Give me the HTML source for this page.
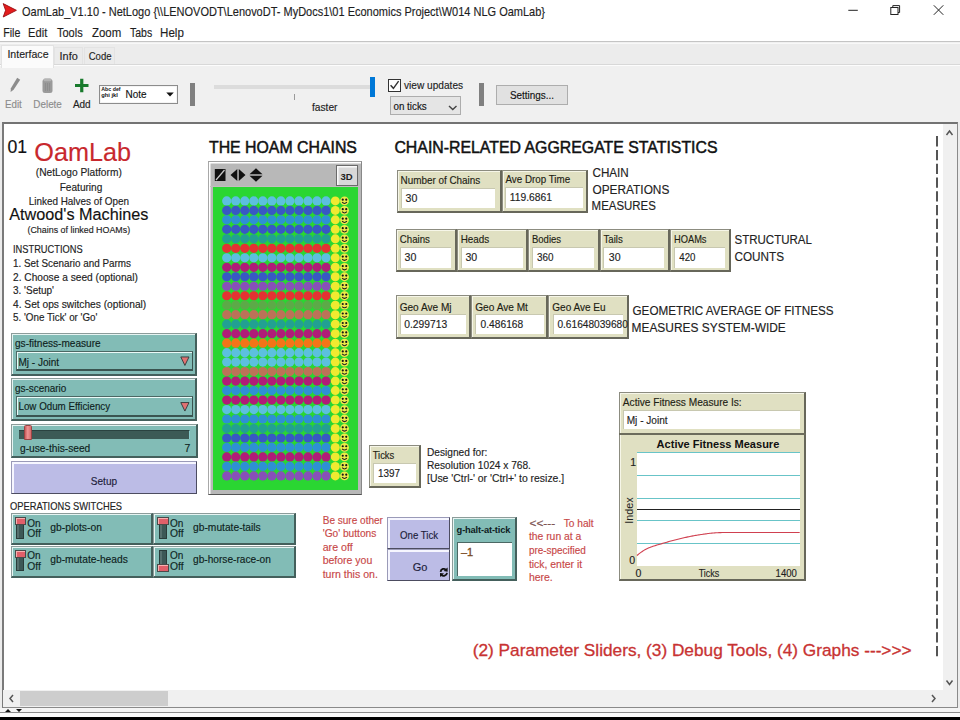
<!DOCTYPE html><html><head><meta charset="utf-8"><style>
html,body{margin:0;padding:0;width:960px;height:720px;overflow:hidden;background:#fff;}
#root{position:relative;width:960px;height:720px;font-family:"Liberation Sans", sans-serif;}
#root>div{position:absolute;box-sizing:border-box;}
svg{position:absolute;left:0;top:0;}
</style></head><body><div id="root">
<div style="left:0px;top:0px;width:960px;height:41px;background:#fff;"></div>
<div style="left:0px;top:41px;width:960px;height:1px;background:#c4c4c4;"></div>
<div style="left:0px;top:42px;width:960px;height:80px;background:#f0f0f0;"></div>
<div style="left:0px;top:43px;width:960px;height:1px;background:#f8f8f8;"></div>
<div style="left:0px;top:44px;width:960px;height:20px;background:#ececec;"></div>
<div style="left:0px;top:64px;width:960px;height:1px;background:#d8d8d8;"></div>
<div style="left:0px;top:65px;width:960px;height:1px;background:#fcfcfc;"></div>
<div style="left:1px;top:45px;width:53px;height:23px;background:#fbfbfb;border:1px solid #e3e3e3;border-bottom:none;"></div>
<div style="left:54px;top:47px;width:29px;height:17px;background:#ebebeb;border:1px solid #e3e3e3;border-bottom:none;"></div>
<div style="left:84px;top:47px;width:31px;height:17px;background:#ebebeb;border:1px solid #e3e3e3;border-bottom:none;"></div>
<div style="left:2px;top:122px;width:956px;height:586px;background:#fff;border-top:2px solid #737373;border-left:2px solid #7a7a7a;border-right:1px solid #8a8a8a;border-bottom:1px solid #8a8a8a;box-sizing:border-box;"></div>
<div style="left:943px;top:124px;width:14px;height:566px;background:#f0f0f0;"></div>
<div style="left:0px;top:122px;width:2px;height:586px;background:#ececec;"></div>
<div style="left:958px;top:122px;width:2px;height:586px;background:#ececec;"></div>
<div style="left:3px;top:690px;width:954px;height:17px;background:#f0f0f0;"></div>
<div style="left:20px;top:691px;width:148px;height:15px;background:#cdcdcd;"></div>
<div style="left:0px;top:708px;width:960px;height:4px;background:#f4f4f4;"></div>
<div style="left:0px;top:712px;width:960px;height:1px;background:#8a8a8a;"></div>
<div style="left:0px;top:713px;width:960px;height:4px;background:#fafafa;"></div>
<div style="left:0px;top:717px;width:960px;height:3px;background:#000;"></div>
<div style="left:98.5px;top:84.75px;width:79.5px;height:19.0px;background:#fff;border:1px solid #8c8c8c;box-shadow:inset 0 0 0 1px #f4f4f4;"></div>
<div style="left:190px;top:82.75px;width:5px;height:23.5px;background:#808080;"></div>
<div style="left:214.4px;top:85.4px;width:155.6px;height:3.3999999999999915px;background:#dcdcdc;"></div>
<div style="left:294px;top:93.5px;width:1px;height:6.5px;background:#9a9a9a;"></div>
<div style="left:370px;top:76.6px;width:5px;height:20.60000000000001px;background:#0078d7;"></div>
<div style="left:388px;top:78.75px;width:13px;height:12.75px;background:#fff;border:1px solid #333;"></div>
<div style="left:390px;top:96px;width:71.25px;height:19.400000000000006px;background:#e5e5e5;border:1px solid #adadad;"></div>
<div style="left:479px;top:82.5px;width:5px;height:23.5px;background:#808080;"></div>
<div style="left:495.6px;top:84.6px;width:72.89999999999998px;height:20.200000000000003px;background:#e1e1e1;border:1px solid #adadad;"></div>
<div style="left:11px;top:332.5px;width:185.5px;height:43.0px;background:#82bcb6;border-top:1px solid #8c9c9a;border-left:1px solid #8c9c9a;border-bottom:2px solid #44605c;border-right:2px solid #44605c;box-shadow:inset 1px 1px 0 #e6f4f2;"></div>
<div style="left:15.5px;top:351px;width:177.0px;height:20.30000000000001px;background:#82bcb6;border-top:1px solid #4c6864;border-left:1px solid #4c6864;border-bottom:2px solid #3a5450;border-right:1px solid #3a5450;box-shadow:inset 1px 1px 0 #eafaf8;"></div>
<div style="left:11px;top:377.6px;width:185.5px;height:43.099999999999966px;background:#82bcb6;border-top:1px solid #8c9c9a;border-left:1px solid #8c9c9a;border-bottom:2px solid #44605c;border-right:2px solid #44605c;box-shadow:inset 1px 1px 0 #e6f4f2;"></div>
<div style="left:15.5px;top:396.3px;width:177.0px;height:20.899999999999977px;background:#82bcb6;border-top:1px solid #4c6864;border-left:1px solid #4c6864;border-bottom:2px solid #3a5450;border-right:1px solid #3a5450;box-shadow:inset 1px 1px 0 #eafaf8;"></div>
<div style="left:11px;top:424.25px;width:186.7px;height:33.35000000000002px;background:#82bcb6;border-top:1px solid #8c9c9a;border-left:1px solid #8c9c9a;border-bottom:2px solid #44605c;border-right:2px solid #44605c;box-shadow:inset 1px 1px 0 #e6f4f2;"></div>
<div style="left:18.5px;top:429.8px;width:171.9px;height:9.0px;background:#3c5a56;border-top:1px solid #2a4240;border-right:1px solid #8cc;"></div>
<div style="left:24.2px;top:425.3px;width:7.800000000000001px;height:14.5px;background:linear-gradient(to right,#c85a5a,#f09494 45%,#d46a6a);border:1px solid #9a4444;border-radius:1.5px 1.5px 0 0;"></div>
<div style="left:11px;top:461.3px;width:185.9px;height:32.5px;background:#bcbce6;border-top:1px solid #9a9ab8;border-left:1px solid #9a9ab8;border-bottom:1.6px solid #4c4c60;border-right:1.6px solid #4c4c60;box-shadow:inset 2px 2px 0 #f6f6ff;"></div>
<div style="left:10.5px;top:513.4px;width:142.5px;height:31.899999999999977px;background:#82bcb6;border-top:1px solid #8c9c9a;border-left:1px solid #8c9c9a;border-bottom:2px solid #44605c;border-right:2px solid #44605c;box-shadow:inset 1px 1px 0 #e6f4f2;"></div>
<div style="left:16.3px;top:517.4px;width:7.800000000000001px;height:21.299999999999955px;background:#3c5856;border:1px solid #2a3c3a;box-shadow:inset 2px 0 0 #56706e;"></div>
<div style="left:14.6px;top:517.4px;width:11.4px;height:7.600000000000023px;background:#e0606a;border:1px solid #4a4a4a;box-shadow:inset 1px 1px 0 #f8b0b0;"></div>
<div style="left:153.3px;top:513.4px;width:142.5px;height:31.899999999999977px;background:#82bcb6;border-top:1px solid #8c9c9a;border-left:1px solid #8c9c9a;border-bottom:2px solid #44605c;border-right:2px solid #44605c;box-shadow:inset 1px 1px 0 #e6f4f2;"></div>
<div style="left:159.1px;top:517.4px;width:7.800000000000011px;height:21.299999999999955px;background:#3c5856;border:1px solid #2a3c3a;box-shadow:inset 2px 0 0 #56706e;"></div>
<div style="left:157.4px;top:517.4px;width:11.400000000000006px;height:7.600000000000023px;background:#e0606a;border:1px solid #4a4a4a;box-shadow:inset 1px 1px 0 #f8b0b0;"></div>
<div style="left:10.5px;top:545.5px;width:142.5px;height:32.0px;background:#82bcb6;border-top:1px solid #8c9c9a;border-left:1px solid #8c9c9a;border-bottom:2px solid #44605c;border-right:2px solid #44605c;box-shadow:inset 1px 1px 0 #e6f4f2;"></div>
<div style="left:16.3px;top:550px;width:7.800000000000001px;height:21.299999999999955px;background:#3c5856;border:1px solid #2a3c3a;box-shadow:inset 2px 0 0 #56706e;"></div>
<div style="left:14.6px;top:550px;width:11.4px;height:7.600000000000023px;background:#e0606a;border:1px solid #4a4a4a;box-shadow:inset 1px 1px 0 #f8b0b0;"></div>
<div style="left:153.3px;top:545.5px;width:142.5px;height:32.0px;background:#82bcb6;border-top:1px solid #8c9c9a;border-left:1px solid #8c9c9a;border-bottom:2px solid #44605c;border-right:2px solid #44605c;box-shadow:inset 1px 1px 0 #e6f4f2;"></div>
<div style="left:159.1px;top:550px;width:7.800000000000011px;height:21.299999999999955px;background:#3c5856;border:1px solid #2a3c3a;box-shadow:inset 2px 0 0 #56706e;"></div>
<div style="left:157.4px;top:564px;width:11.400000000000006px;height:7.600000000000023px;background:#e0606a;border:1px solid #4a4a4a;box-shadow:inset 1px 1px 0 #f8b0b0;"></div>
<div style="left:207.8px;top:161.1px;width:153.8px;height:333.9px;background:#b8b8b8;border-top:1px solid #a0a0a0;border-left:1px solid #a8a8a8;border-right:1.5px solid #888;border-bottom:1px solid #555;box-shadow:inset 1.5px 1.5px 0 #fff;"></div>
<div style="left:212.8px;top:186.7px;width:145.0px;height:303.7px;background:#2ad632;"></div>
<div style="left:209.5px;top:185.5px;width:150.5px;height:1.1999999999999886px;background:#c4bcc0;"></div>
<div style="left:335.6px;top:165.3px;width:22.399999999999977px;height:20.69999999999999px;background:#d8d8d8;border:1px solid #6a6a6a;border-bottom-width:1.5px;border-right-width:1.5px;box-shadow:inset 1.5px 1.5px 0 #fafafa;"></div>
<div style="left:396.5px;top:169.6px;width:105.0px;height:43.400000000000006px;background:#e0e0c2;border-top:1px solid #8c8c80;border-left:1px solid #8c8c80;border-bottom:2px solid #67675a;border-right:2px solid #67675a;box-shadow:inset 1px 1px 0 #f6f6e8;"></div>
<div style="left:400.6px;top:187.5px;width:94.39999999999998px;height:20.5px;background:#fff;border-top:1px solid #c8c8b0;border-left:1px solid #c8c8b0;"></div>
<div style="left:501.5px;top:169.5px;width:86.5px;height:43.5px;background:#e0e0c2;border-top:1px solid #8c8c80;border-left:1px solid #8c8c80;border-bottom:2px solid #67675a;border-right:2px solid #67675a;box-shadow:inset 1px 1px 0 #f6f6e8;"></div>
<div style="left:504.6px;top:187px;width:78.10000000000002px;height:21px;background:#fff;border-top:1px solid #c8c8b0;border-left:1px solid #c8c8b0;"></div>
<div style="left:395.8px;top:228.75px;width:60.89999999999998px;height:42.94999999999999px;background:#e0e0c2;border-top:1px solid #8c8c80;border-left:1px solid #8c8c80;border-bottom:2px solid #67675a;border-right:2px solid #67675a;box-shadow:inset 1px 1px 0 #f6f6e8;"></div>
<div style="left:399.6px;top:247px;width:51.89999999999998px;height:20.5px;background:#fff;border-top:1px solid #c8c8b0;border-left:1px solid #c8c8b0;"></div>
<div style="left:456.7px;top:228.75px;width:71.30000000000001px;height:42.94999999999999px;background:#e0e0c2;border-top:1px solid #8c8c80;border-left:1px solid #8c8c80;border-bottom:2px solid #67675a;border-right:2px solid #67675a;box-shadow:inset 1px 1px 0 #f6f6e8;"></div>
<div style="left:460.5px;top:247px;width:62.5px;height:20.5px;background:#fff;border-top:1px solid #c8c8b0;border-left:1px solid #c8c8b0;"></div>
<div style="left:528px;top:228.75px;width:71.5px;height:42.94999999999999px;background:#e0e0c2;border-top:1px solid #8c8c80;border-left:1px solid #8c8c80;border-bottom:2px solid #67675a;border-right:2px solid #67675a;box-shadow:inset 1px 1px 0 #f6f6e8;"></div>
<div style="left:531.8px;top:247px;width:62.700000000000045px;height:20.5px;background:#fff;border-top:1px solid #c8c8b0;border-left:1px solid #c8c8b0;"></div>
<div style="left:599.5px;top:228.75px;width:70.5px;height:42.94999999999999px;background:#e0e0c2;border-top:1px solid #8c8c80;border-left:1px solid #8c8c80;border-bottom:2px solid #67675a;border-right:2px solid #67675a;box-shadow:inset 1px 1px 0 #f6f6e8;"></div>
<div style="left:603.3px;top:247px;width:61.200000000000045px;height:20.5px;background:#fff;border-top:1px solid #c8c8b0;border-left:1px solid #c8c8b0;"></div>
<div style="left:670px;top:228.75px;width:61.25px;height:42.94999999999999px;background:#e0e0c2;border-top:1px solid #8c8c80;border-left:1px solid #8c8c80;border-bottom:2px solid #67675a;border-right:2px solid #67675a;box-shadow:inset 1px 1px 0 #f6f6e8;"></div>
<div style="left:673.8px;top:247px;width:51.200000000000045px;height:20.5px;background:#fff;border-top:1px solid #c8c8b0;border-left:1px solid #c8c8b0;"></div>
<div style="left:395.7px;top:295.3px;width:75.55000000000001px;height:43.5px;background:#e0e0c2;border-top:1px solid #8c8c80;border-left:1px solid #8c8c80;border-bottom:2px solid #67675a;border-right:2px solid #67675a;box-shadow:inset 1px 1px 0 #f6f6e8;"></div>
<div style="left:399.9px;top:314px;width:66.10000000000002px;height:19.600000000000023px;background:#fff;border-top:1px solid #c8c8b0;border-left:1px solid #c8c8b0;"></div>
<div style="left:471.25px;top:295.3px;width:77.04999999999995px;height:43.5px;background:#e0e0c2;border-top:1px solid #8c8c80;border-left:1px solid #8c8c80;border-bottom:2px solid #67675a;border-right:2px solid #67675a;box-shadow:inset 1px 1px 0 #f6f6e8;"></div>
<div style="left:475.45px;top:314px;width:68.15000000000003px;height:19.600000000000023px;background:#fff;border-top:1px solid #c8c8b0;border-left:1px solid #c8c8b0;"></div>
<div style="left:548.3px;top:295.3px;width:80.70000000000005px;height:43.5px;background:#e0e0c2;border-top:1px solid #8c8c80;border-left:1px solid #8c8c80;border-bottom:2px solid #67675a;border-right:2px solid #67675a;box-shadow:inset 1px 1px 0 #f6f6e8;"></div>
<div style="left:552.5px;top:314px;width:70.5px;height:19.600000000000023px;background:#fff;border-top:1px solid #c8c8b0;border-left:1px solid #c8c8b0;"></div>
<div style="left:368.7px;top:444.6px;width:52.80000000000001px;height:43.14999999999998px;background:#e0e0c2;border-top:1px solid #8c8c80;border-left:1px solid #8c8c80;border-bottom:2px solid #67675a;border-right:2px solid #67675a;box-shadow:inset 1px 1px 0 #f6f6e8;"></div>
<div style="left:372.6px;top:462.5px;width:43.599999999999966px;height:20.69999999999999px;background:#fff;border-top:1px solid #c8c8b0;border-left:1px solid #c8c8b0;"></div>
<div style="left:387.3px;top:516.6px;width:63.19999999999999px;height:32.0px;background:#bcbce6;border-top:1px solid #9a9ab8;border-left:1px solid #9a9ab8;border-bottom:1.6px solid #4c4c60;border-right:1.6px solid #4c4c60;box-shadow:inset 2px 2px 0 #f6f6ff;"></div>
<div style="left:387.3px;top:549.4px;width:63.19999999999999px;height:31.5px;background:#bcbce6;border-top:1px solid #9a9ab8;border-left:1px solid #9a9ab8;border-bottom:1.6px solid #4c4c60;border-right:1.6px solid #4c4c60;box-shadow:inset 2px 2px 0 #f6f6ff;"></div>
<div style="left:451.5px;top:516.6px;width:65.10000000000002px;height:64.29999999999995px;background:#82bcb6;border-top:1px solid #8c9c9a;border-left:1px solid #8c9c9a;border-bottom:2px solid #44605c;border-right:2px solid #44605c;box-shadow:inset 1px 1px 0 #e6f4f2;"></div>
<div style="left:457px;top:542.4px;width:55px;height:33.200000000000045px;background:#fff;border-top:1px solid #4c6864;border-left:1px solid #4c6864;"></div>
<div style="left:619px;top:391.8px;width:186.5px;height:189.40000000000003px;background:#e0e0c2;border-top:1px solid #8c8c80;border-left:1px solid #8c8c80;border-bottom:2px solid #67675a;border-right:2px solid #67675a;box-shadow:inset 1px 1px 0 #f6f6e8;"></div>
<div style="left:619px;top:433.2px;width:186.5px;height:1.400000000000034px;background:#6c6c5c;"></div>
<div style="left:622.8px;top:409.6px;width:176.9000000000001px;height:19.799999999999955px;background:#fff;border-top:1px solid #c8c8b0;border-left:1px solid #c8c8b0;"></div>
<div style="left:636.7px;top:451.75px;width:163.0px;height:114.25px;background:#fff;"></div>
<div style="left:636.7px;top:452px;width:163.0px;height:1px;background:#68c4c8;"></div>
<div style="left:636.7px;top:475px;width:163.0px;height:1px;background:#68c4c8;"></div>
<div style="left:636.7px;top:498px;width:163.0px;height:1px;background:#68c4c8;"></div>
<div style="left:636.7px;top:520px;width:163.0px;height:1px;background:#68c4c8;"></div>
<div style="left:636.7px;top:543px;width:163.0px;height:1px;background:#68c4c8;"></div>
<div style="left:636.7px;top:509px;width:163.0px;height:1px;background:#222;"></div>
<svg width="960" height="720" viewBox="0 0 960 720" font-family='"Liberation Sans", sans-serif'>
<path d="M17.2,77.8 L20.2,79.8 L13.6,89.8 L10.6,92 L10.9,88.2 Z" fill="#8c8c8c"/>
<rect x="42.5" y="79" width="10" height="14" rx="2.5" fill="#9a9a9a"/><rect x="43.5" y="78.3" width="8" height="3" rx="1.5" fill="#b4b4b4"/><path d="M45.5,83 V91 M47.5,83 V91 M49.5,83 V91" stroke="#8a8a8a" stroke-width="0.7"/>
<path d="M75,85.5 H88.5 M81.75,78.75 V92.3" stroke="#187a2c" stroke-width="3.2"/>
<path d="M166.25,92.5 H173.75 L170,96.5 Z" fill="#111"/>
<path d="M390.6,85.2 L393.4,88.3 L398.6,81.2" stroke="#333" stroke-width="1.4" fill="none"/>
<path d="M449,106 L452.75,109.6 L456.5,106" stroke="#444" stroke-width="1.4" fill="none"/>
<path d="M848.3,10.3 H857.8" stroke="#222" stroke-width="1"/>
<rect x="890.8" y="7.5" width="7.2" height="7" fill="none" stroke="#222" stroke-width="1"/><path d="M892.8,7.5 V5.6 H899.6 V12.5 H898" fill="none" stroke="#222" stroke-width="1"/>
<path d="M933.8,5.3 L943.3,14.8 M943.3,5.3 L933.8,14.8" stroke="#222" stroke-width="1"/>
<path d="M3.2,3.6 L16.4,10.3 L3.2,17 L5.6,10.3 Z" fill="#e41c1c" stroke="#9a0c12" stroke-width="0.9" stroke-linejoin="round"/>
<path d="M946.5,135 L949.5,131 L952.5,135" stroke="#555" stroke-width="1.5" fill="none"/>
<path d="M946.5,680.5 L949.5,684.5 L952.5,680.5" stroke="#555" stroke-width="1.5" fill="none"/>
<path d="M13,695 L10,698.5 L13,702" stroke="#555" stroke-width="1.5" fill="none"/>
<path d="M932,695 L935,698.5 L932,702" stroke="#555" stroke-width="1.5" fill="none"/>
<path d="M5,712 L8,709 L11,712 Z M16,709 H22 L19,712 Z" fill="#111"/>
<line x1="937" y1="136.1" x2="937" y2="657" stroke="#555" stroke-width="2" stroke-dasharray="10.3 3.48"/>
<path d="M180.8,356.95 H189 L184.9,365.45 Z" fill="#e07272" stroke="#303838" stroke-width="0.9" stroke-linejoin="round"/>
<path d="M180.8,402.55 H189 L184.9,411.05 Z" fill="#e07272" stroke="#303838" stroke-width="0.9" stroke-linejoin="round"/>
<path d="M214.8,169 H225.5 V181 H214.8 Z" fill="#111"/><path d="M216,180 L224.5,170" stroke="#c8c8c8" stroke-width="1.2"/>
<path d="M237.3,169 L230.5,175 L237.3,181 Z M238.8,169 L245.5,175 L238.8,181 Z" fill="#111"/>
<path d="M249.5,174.2 L256,168.3 L262.5,174.2 Z M249.5,175.8 L256,181.7 L262.5,175.8 Z" fill="#111"/>
<g><circle cx="226.70" cy="200.90" r="4.6" fill="#5cc0de"/><circle cx="235.73" cy="200.90" r="4.6" fill="#5cc0de"/><circle cx="244.76" cy="200.90" r="4.6" fill="#5cc0de"/><circle cx="253.79" cy="200.90" r="4.6" fill="#5cc0de"/><circle cx="262.82" cy="200.90" r="4.6" fill="#5cc0de"/><circle cx="271.85" cy="200.90" r="4.6" fill="#5cc0de"/><circle cx="280.88" cy="200.90" r="4.6" fill="#5cc0de"/><circle cx="289.91" cy="200.90" r="4.6" fill="#5cc0de"/><circle cx="298.94" cy="200.90" r="4.6" fill="#5cc0de"/><circle cx="307.97" cy="200.90" r="4.6" fill="#5cc0de"/><circle cx="317.00" cy="200.90" r="4.6" fill="#5cc0de"/><circle cx="326.03" cy="200.90" r="4.6" fill="#5cc0de"/><circle cx="335.3" cy="200.90" r="4.5" fill="#f0ea30"/><circle cx="344.5" cy="200.90" r="4.4" fill="#ecea48"/><circle cx="342.75" cy="199.70" r="1.1" fill="#161616"/><circle cx="346.25" cy="199.70" r="1.1" fill="#161616"/><path d="M342.1,202.20 Q344.5,204.80 346.9,202.20" stroke="#222" stroke-width="1.1" fill="none"/><circle cx="226.70" cy="210.38" r="4.6" fill="#3858c4"/><circle cx="235.73" cy="210.38" r="4.6" fill="#3858c4"/><circle cx="244.76" cy="210.38" r="4.6" fill="#3858c4"/><circle cx="253.79" cy="210.38" r="4.6" fill="#3858c4"/><circle cx="262.82" cy="210.38" r="4.6" fill="#3858c4"/><circle cx="271.85" cy="210.38" r="4.6" fill="#3858c4"/><circle cx="280.88" cy="210.38" r="4.6" fill="#3858c4"/><circle cx="289.91" cy="210.38" r="4.6" fill="#3858c4"/><circle cx="298.94" cy="210.38" r="4.6" fill="#3858c4"/><circle cx="307.97" cy="210.38" r="4.6" fill="#3858c4"/><circle cx="317.00" cy="210.38" r="4.6" fill="#3858c4"/><circle cx="326.03" cy="210.38" r="4.6" fill="#3858c4"/><circle cx="335.3" cy="210.38" r="4.5" fill="#f0ea30"/><circle cx="344.5" cy="210.38" r="4.4" fill="#ecea48"/><circle cx="342.75" cy="209.18" r="1.1" fill="#161616"/><circle cx="346.25" cy="209.18" r="1.1" fill="#161616"/><path d="M342.1,211.68 Q344.5,214.28 346.9,211.68" stroke="#222" stroke-width="1.1" fill="none"/><circle cx="226.70" cy="219.87" r="4.6" fill="#2e90d4"/><circle cx="235.73" cy="219.87" r="4.6" fill="#2e90d4"/><circle cx="244.76" cy="219.87" r="4.6" fill="#2e90d4"/><circle cx="253.79" cy="219.87" r="4.6" fill="#2e90d4"/><circle cx="262.82" cy="219.87" r="4.6" fill="#2e90d4"/><circle cx="271.85" cy="219.87" r="4.6" fill="#2e90d4"/><circle cx="280.88" cy="219.87" r="4.6" fill="#2e90d4"/><circle cx="289.91" cy="219.87" r="4.6" fill="#2e90d4"/><circle cx="298.94" cy="219.87" r="4.6" fill="#2e90d4"/><circle cx="307.97" cy="219.87" r="4.6" fill="#2e90d4"/><circle cx="317.00" cy="219.87" r="4.6" fill="#2e90d4"/><circle cx="326.03" cy="219.87" r="4.6" fill="#2e90d4"/><circle cx="335.3" cy="219.87" r="4.5" fill="#f0ea30"/><circle cx="344.5" cy="219.87" r="4.4" fill="#ecea48"/><circle cx="342.75" cy="218.67" r="1.1" fill="#161616"/><circle cx="346.25" cy="218.67" r="1.1" fill="#161616"/><path d="M342.1,221.17 Q344.5,223.77 346.9,221.17" stroke="#222" stroke-width="1.1" fill="none"/><circle cx="226.70" cy="229.35" r="4.6" fill="#3858c4"/><circle cx="235.73" cy="229.35" r="4.6" fill="#3858c4"/><circle cx="244.76" cy="229.35" r="4.6" fill="#3858c4"/><circle cx="253.79" cy="229.35" r="4.6" fill="#3858c4"/><circle cx="262.82" cy="229.35" r="4.6" fill="#3858c4"/><circle cx="271.85" cy="229.35" r="4.6" fill="#3858c4"/><circle cx="280.88" cy="229.35" r="4.6" fill="#3858c4"/><circle cx="289.91" cy="229.35" r="4.6" fill="#3858c4"/><circle cx="298.94" cy="229.35" r="4.6" fill="#3858c4"/><circle cx="307.97" cy="229.35" r="4.6" fill="#3858c4"/><circle cx="317.00" cy="229.35" r="4.6" fill="#3858c4"/><circle cx="326.03" cy="229.35" r="4.6" fill="#3858c4"/><circle cx="335.3" cy="229.35" r="4.5" fill="#f0ea30"/><circle cx="344.5" cy="229.35" r="4.4" fill="#ecea48"/><circle cx="342.75" cy="228.15" r="1.1" fill="#161616"/><circle cx="346.25" cy="228.15" r="1.1" fill="#161616"/><path d="M342.1,230.65 Q344.5,233.25 346.9,230.65" stroke="#222" stroke-width="1.1" fill="none"/><circle cx="226.70" cy="238.83" r="4.6" fill="#22a092"/><circle cx="235.73" cy="238.83" r="4.6" fill="#22a092"/><circle cx="244.76" cy="238.83" r="4.6" fill="#22a092"/><circle cx="253.79" cy="238.83" r="4.6" fill="#22a092"/><circle cx="262.82" cy="238.83" r="4.6" fill="#22a092"/><circle cx="271.85" cy="238.83" r="4.6" fill="#22a092"/><circle cx="280.88" cy="238.83" r="4.6" fill="#22a092"/><circle cx="289.91" cy="238.83" r="4.6" fill="#22a092"/><circle cx="298.94" cy="238.83" r="4.6" fill="#22a092"/><circle cx="307.97" cy="238.83" r="4.6" fill="#22a092"/><circle cx="317.00" cy="238.83" r="4.6" fill="#22a092"/><circle cx="326.03" cy="238.83" r="4.6" fill="#22a092"/><circle cx="335.3" cy="238.83" r="4.5" fill="#f0ea30"/><circle cx="344.5" cy="238.83" r="4.4" fill="#ecea48"/><circle cx="342.75" cy="237.63" r="1.1" fill="#161616"/><circle cx="346.25" cy="237.63" r="1.1" fill="#161616"/><path d="M342.1,240.13 Q344.5,242.73 346.9,240.13" stroke="#222" stroke-width="1.1" fill="none"/><circle cx="226.70" cy="248.31" r="4.6" fill="#e43232"/><circle cx="235.73" cy="248.31" r="4.6" fill="#e43232"/><circle cx="244.76" cy="248.31" r="4.6" fill="#e43232"/><circle cx="253.79" cy="248.31" r="4.6" fill="#e43232"/><circle cx="262.82" cy="248.31" r="4.6" fill="#e43232"/><circle cx="271.85" cy="248.31" r="4.6" fill="#e43232"/><circle cx="280.88" cy="248.31" r="4.6" fill="#e43232"/><circle cx="289.91" cy="248.31" r="4.6" fill="#e43232"/><circle cx="298.94" cy="248.31" r="4.6" fill="#e43232"/><circle cx="307.97" cy="248.31" r="4.6" fill="#e43232"/><circle cx="317.00" cy="248.31" r="4.6" fill="#e43232"/><circle cx="326.03" cy="248.31" r="4.6" fill="#e43232"/><circle cx="335.3" cy="248.31" r="4.5" fill="#f0ea30"/><circle cx="344.5" cy="248.31" r="4.4" fill="#ecea48"/><circle cx="342.75" cy="247.12" r="1.1" fill="#161616"/><circle cx="346.25" cy="247.12" r="1.1" fill="#161616"/><path d="M342.1,249.62 Q344.5,252.22 346.9,249.62" stroke="#222" stroke-width="1.1" fill="none"/><circle cx="226.70" cy="257.80" r="4.6" fill="#5cc0de"/><circle cx="235.73" cy="257.80" r="4.6" fill="#5cc0de"/><circle cx="244.76" cy="257.80" r="4.6" fill="#5cc0de"/><circle cx="253.79" cy="257.80" r="4.6" fill="#5cc0de"/><circle cx="262.82" cy="257.80" r="4.6" fill="#5cc0de"/><circle cx="271.85" cy="257.80" r="4.6" fill="#5cc0de"/><circle cx="280.88" cy="257.80" r="4.6" fill="#5cc0de"/><circle cx="289.91" cy="257.80" r="4.6" fill="#5cc0de"/><circle cx="298.94" cy="257.80" r="4.6" fill="#5cc0de"/><circle cx="307.97" cy="257.80" r="4.6" fill="#5cc0de"/><circle cx="317.00" cy="257.80" r="4.6" fill="#5cc0de"/><circle cx="326.03" cy="257.80" r="4.6" fill="#5cc0de"/><circle cx="335.3" cy="257.80" r="4.5" fill="#f0ea30"/><circle cx="344.5" cy="257.80" r="4.4" fill="#ecea48"/><circle cx="342.75" cy="256.60" r="1.1" fill="#161616"/><circle cx="346.25" cy="256.60" r="1.1" fill="#161616"/><path d="M342.1,259.10 Q344.5,261.70 346.9,259.10" stroke="#222" stroke-width="1.1" fill="none"/><circle cx="226.70" cy="267.28" r="4.6" fill="#b01c78"/><circle cx="235.73" cy="267.28" r="4.6" fill="#b01c78"/><circle cx="244.76" cy="267.28" r="4.6" fill="#b01c78"/><circle cx="253.79" cy="267.28" r="4.6" fill="#b01c78"/><circle cx="262.82" cy="267.28" r="4.6" fill="#b01c78"/><circle cx="271.85" cy="267.28" r="4.6" fill="#b01c78"/><circle cx="280.88" cy="267.28" r="4.6" fill="#b01c78"/><circle cx="289.91" cy="267.28" r="4.6" fill="#b01c78"/><circle cx="298.94" cy="267.28" r="4.6" fill="#b01c78"/><circle cx="307.97" cy="267.28" r="4.6" fill="#b01c78"/><circle cx="317.00" cy="267.28" r="4.6" fill="#b01c78"/><circle cx="326.03" cy="267.28" r="4.6" fill="#b01c78"/><circle cx="335.3" cy="267.28" r="4.5" fill="#f0ea30"/><circle cx="344.5" cy="267.28" r="4.4" fill="#ecea48"/><circle cx="342.75" cy="266.08" r="1.1" fill="#161616"/><circle cx="346.25" cy="266.08" r="1.1" fill="#161616"/><path d="M342.1,268.58 Q344.5,271.18 346.9,268.58" stroke="#222" stroke-width="1.1" fill="none"/><circle cx="226.70" cy="276.76" r="4.6" fill="#3858c4"/><circle cx="235.73" cy="276.76" r="4.6" fill="#3858c4"/><circle cx="244.76" cy="276.76" r="4.6" fill="#3858c4"/><circle cx="253.79" cy="276.76" r="4.6" fill="#3858c4"/><circle cx="262.82" cy="276.76" r="4.6" fill="#3858c4"/><circle cx="271.85" cy="276.76" r="4.6" fill="#3858c4"/><circle cx="280.88" cy="276.76" r="4.6" fill="#3858c4"/><circle cx="289.91" cy="276.76" r="4.6" fill="#3858c4"/><circle cx="298.94" cy="276.76" r="4.6" fill="#3858c4"/><circle cx="307.97" cy="276.76" r="4.6" fill="#3858c4"/><circle cx="317.00" cy="276.76" r="4.6" fill="#3858c4"/><circle cx="326.03" cy="276.76" r="4.6" fill="#3858c4"/><circle cx="335.3" cy="276.76" r="4.5" fill="#f0ea30"/><circle cx="344.5" cy="276.76" r="4.4" fill="#ecea48"/><circle cx="342.75" cy="275.56" r="1.1" fill="#161616"/><circle cx="346.25" cy="275.56" r="1.1" fill="#161616"/><path d="M342.1,278.06 Q344.5,280.66 346.9,278.06" stroke="#222" stroke-width="1.1" fill="none"/><circle cx="226.70" cy="286.25" r="4.6" fill="#8850b8"/><circle cx="235.73" cy="286.25" r="4.6" fill="#8850b8"/><circle cx="244.76" cy="286.25" r="4.6" fill="#8850b8"/><circle cx="253.79" cy="286.25" r="4.6" fill="#8850b8"/><circle cx="262.82" cy="286.25" r="4.6" fill="#8850b8"/><circle cx="271.85" cy="286.25" r="4.6" fill="#8850b8"/><circle cx="280.88" cy="286.25" r="4.6" fill="#8850b8"/><circle cx="289.91" cy="286.25" r="4.6" fill="#8850b8"/><circle cx="298.94" cy="286.25" r="4.6" fill="#8850b8"/><circle cx="307.97" cy="286.25" r="4.6" fill="#8850b8"/><circle cx="317.00" cy="286.25" r="4.6" fill="#8850b8"/><circle cx="326.03" cy="286.25" r="4.6" fill="#8850b8"/><circle cx="335.3" cy="286.25" r="4.5" fill="#f0ea30"/><circle cx="344.5" cy="286.25" r="4.4" fill="#ecea48"/><circle cx="342.75" cy="285.05" r="1.1" fill="#161616"/><circle cx="346.25" cy="285.05" r="1.1" fill="#161616"/><path d="M342.1,287.55 Q344.5,290.15 346.9,287.55" stroke="#222" stroke-width="1.1" fill="none"/><circle cx="226.70" cy="295.73" r="4.6" fill="#e43232"/><circle cx="235.73" cy="295.73" r="4.6" fill="#e43232"/><circle cx="244.76" cy="295.73" r="4.6" fill="#e43232"/><circle cx="253.79" cy="295.73" r="4.6" fill="#e43232"/><circle cx="262.82" cy="295.73" r="4.6" fill="#e43232"/><circle cx="271.85" cy="295.73" r="4.6" fill="#e43232"/><circle cx="280.88" cy="295.73" r="4.6" fill="#e43232"/><circle cx="289.91" cy="295.73" r="4.6" fill="#e43232"/><circle cx="298.94" cy="295.73" r="4.6" fill="#e43232"/><circle cx="307.97" cy="295.73" r="4.6" fill="#e43232"/><circle cx="317.00" cy="295.73" r="4.6" fill="#e43232"/><circle cx="326.03" cy="295.73" r="4.6" fill="#e43232"/><circle cx="335.3" cy="295.73" r="4.5" fill="#f0ea30"/><circle cx="344.5" cy="295.73" r="4.4" fill="#ecea48"/><circle cx="342.75" cy="294.53" r="1.1" fill="#161616"/><circle cx="346.25" cy="294.53" r="1.1" fill="#161616"/><path d="M342.1,297.03 Q344.5,299.63 346.9,297.03" stroke="#222" stroke-width="1.1" fill="none"/><circle cx="226.70" cy="305.21" r="4.6" fill="#5caa48"/><circle cx="235.73" cy="305.21" r="4.6" fill="#5caa48"/><circle cx="244.76" cy="305.21" r="4.6" fill="#5caa48"/><circle cx="253.79" cy="305.21" r="4.6" fill="#5caa48"/><circle cx="262.82" cy="305.21" r="4.6" fill="#5caa48"/><circle cx="271.85" cy="305.21" r="4.6" fill="#5caa48"/><circle cx="280.88" cy="305.21" r="4.6" fill="#5caa48"/><circle cx="289.91" cy="305.21" r="4.6" fill="#5caa48"/><circle cx="298.94" cy="305.21" r="4.6" fill="#5caa48"/><circle cx="307.97" cy="305.21" r="4.6" fill="#5caa48"/><circle cx="317.00" cy="305.21" r="4.6" fill="#5caa48"/><circle cx="326.03" cy="305.21" r="4.6" fill="#5caa48"/><circle cx="335.3" cy="305.21" r="4.5" fill="#f0ea30"/><circle cx="344.5" cy="305.21" r="4.4" fill="#ecea48"/><circle cx="342.75" cy="304.01" r="1.1" fill="#161616"/><circle cx="346.25" cy="304.01" r="1.1" fill="#161616"/><path d="M342.1,306.51 Q344.5,309.11 346.9,306.51" stroke="#222" stroke-width="1.1" fill="none"/><circle cx="226.70" cy="314.70" r="4.6" fill="#bc7258"/><circle cx="235.73" cy="314.70" r="4.6" fill="#bc7258"/><circle cx="244.76" cy="314.70" r="4.6" fill="#bc7258"/><circle cx="253.79" cy="314.70" r="4.6" fill="#bc7258"/><circle cx="262.82" cy="314.70" r="4.6" fill="#bc7258"/><circle cx="271.85" cy="314.70" r="4.6" fill="#bc7258"/><circle cx="280.88" cy="314.70" r="4.6" fill="#bc7258"/><circle cx="289.91" cy="314.70" r="4.6" fill="#bc7258"/><circle cx="298.94" cy="314.70" r="4.6" fill="#bc7258"/><circle cx="307.97" cy="314.70" r="4.6" fill="#bc7258"/><circle cx="317.00" cy="314.70" r="4.6" fill="#bc7258"/><circle cx="326.03" cy="314.70" r="4.6" fill="#bc7258"/><circle cx="335.3" cy="314.70" r="4.5" fill="#f0ea30"/><circle cx="344.5" cy="314.70" r="4.4" fill="#ecea48"/><circle cx="342.75" cy="313.50" r="1.1" fill="#161616"/><circle cx="346.25" cy="313.50" r="1.1" fill="#161616"/><path d="M342.1,316.00 Q344.5,318.60 346.9,316.00" stroke="#222" stroke-width="1.1" fill="none"/><circle cx="226.70" cy="324.18" r="4.6" fill="#22a092"/><circle cx="235.73" cy="324.18" r="4.6" fill="#22a092"/><circle cx="244.76" cy="324.18" r="4.6" fill="#22a092"/><circle cx="253.79" cy="324.18" r="4.6" fill="#22a092"/><circle cx="262.82" cy="324.18" r="4.6" fill="#22a092"/><circle cx="271.85" cy="324.18" r="4.6" fill="#22a092"/><circle cx="280.88" cy="324.18" r="4.6" fill="#22a092"/><circle cx="289.91" cy="324.18" r="4.6" fill="#22a092"/><circle cx="298.94" cy="324.18" r="4.6" fill="#22a092"/><circle cx="307.97" cy="324.18" r="4.6" fill="#22a092"/><circle cx="317.00" cy="324.18" r="4.6" fill="#22a092"/><circle cx="326.03" cy="324.18" r="4.6" fill="#22a092"/><circle cx="335.3" cy="324.18" r="4.5" fill="#f0ea30"/><circle cx="344.5" cy="324.18" r="4.4" fill="#ecea48"/><circle cx="342.75" cy="322.98" r="1.1" fill="#161616"/><circle cx="346.25" cy="322.98" r="1.1" fill="#161616"/><path d="M342.1,325.48 Q344.5,328.08 346.9,325.48" stroke="#222" stroke-width="1.1" fill="none"/><circle cx="226.70" cy="333.66" r="4.6" fill="#b01c78"/><circle cx="235.73" cy="333.66" r="4.6" fill="#b01c78"/><circle cx="244.76" cy="333.66" r="4.6" fill="#b01c78"/><circle cx="253.79" cy="333.66" r="4.6" fill="#b01c78"/><circle cx="262.82" cy="333.66" r="4.6" fill="#b01c78"/><circle cx="271.85" cy="333.66" r="4.6" fill="#b01c78"/><circle cx="280.88" cy="333.66" r="4.6" fill="#b01c78"/><circle cx="289.91" cy="333.66" r="4.6" fill="#b01c78"/><circle cx="298.94" cy="333.66" r="4.6" fill="#b01c78"/><circle cx="307.97" cy="333.66" r="4.6" fill="#b01c78"/><circle cx="317.00" cy="333.66" r="4.6" fill="#b01c78"/><circle cx="326.03" cy="333.66" r="4.6" fill="#b01c78"/><circle cx="335.3" cy="333.66" r="4.5" fill="#f0ea30"/><circle cx="344.5" cy="333.66" r="4.4" fill="#ecea48"/><circle cx="342.75" cy="332.46" r="1.1" fill="#161616"/><circle cx="346.25" cy="332.46" r="1.1" fill="#161616"/><path d="M342.1,334.96 Q344.5,337.56 346.9,334.96" stroke="#222" stroke-width="1.1" fill="none"/><circle cx="226.70" cy="343.14" r="4.6" fill="#f47418"/><circle cx="235.73" cy="343.14" r="4.6" fill="#f47418"/><circle cx="244.76" cy="343.14" r="4.6" fill="#f47418"/><circle cx="253.79" cy="343.14" r="4.6" fill="#f47418"/><circle cx="262.82" cy="343.14" r="4.6" fill="#f47418"/><circle cx="271.85" cy="343.14" r="4.6" fill="#f47418"/><circle cx="280.88" cy="343.14" r="4.6" fill="#f47418"/><circle cx="289.91" cy="343.14" r="4.6" fill="#f47418"/><circle cx="298.94" cy="343.14" r="4.6" fill="#f47418"/><circle cx="307.97" cy="343.14" r="4.6" fill="#f47418"/><circle cx="317.00" cy="343.14" r="4.6" fill="#f47418"/><circle cx="326.03" cy="343.14" r="4.6" fill="#f47418"/><circle cx="335.3" cy="343.14" r="4.5" fill="#f0ea30"/><circle cx="344.5" cy="343.14" r="4.4" fill="#ecea48"/><circle cx="342.75" cy="341.94" r="1.1" fill="#161616"/><circle cx="346.25" cy="341.94" r="1.1" fill="#161616"/><path d="M342.1,344.44 Q344.5,347.04 346.9,344.44" stroke="#222" stroke-width="1.1" fill="none"/><circle cx="226.70" cy="352.63" r="4.6" fill="#5cc0de"/><circle cx="235.73" cy="352.63" r="4.6" fill="#5cc0de"/><circle cx="244.76" cy="352.63" r="4.6" fill="#5cc0de"/><circle cx="253.79" cy="352.63" r="4.6" fill="#5cc0de"/><circle cx="262.82" cy="352.63" r="4.6" fill="#5cc0de"/><circle cx="271.85" cy="352.63" r="4.6" fill="#5cc0de"/><circle cx="280.88" cy="352.63" r="4.6" fill="#5cc0de"/><circle cx="289.91" cy="352.63" r="4.6" fill="#5cc0de"/><circle cx="298.94" cy="352.63" r="4.6" fill="#5cc0de"/><circle cx="307.97" cy="352.63" r="4.6" fill="#5cc0de"/><circle cx="317.00" cy="352.63" r="4.6" fill="#5cc0de"/><circle cx="326.03" cy="352.63" r="4.6" fill="#5cc0de"/><circle cx="335.3" cy="352.63" r="4.5" fill="#f0ea30"/><circle cx="344.5" cy="352.63" r="4.4" fill="#ecea48"/><circle cx="342.75" cy="351.43" r="1.1" fill="#161616"/><circle cx="346.25" cy="351.43" r="1.1" fill="#161616"/><path d="M342.1,353.93 Q344.5,356.53 346.9,353.93" stroke="#222" stroke-width="1.1" fill="none"/><circle cx="226.70" cy="362.11" r="4.6" fill="#5cc0de"/><circle cx="235.73" cy="362.11" r="4.6" fill="#5cc0de"/><circle cx="244.76" cy="362.11" r="4.6" fill="#5cc0de"/><circle cx="253.79" cy="362.11" r="4.6" fill="#5cc0de"/><circle cx="262.82" cy="362.11" r="4.6" fill="#5cc0de"/><circle cx="271.85" cy="362.11" r="4.6" fill="#5cc0de"/><circle cx="280.88" cy="362.11" r="4.6" fill="#5cc0de"/><circle cx="289.91" cy="362.11" r="4.6" fill="#5cc0de"/><circle cx="298.94" cy="362.11" r="4.6" fill="#5cc0de"/><circle cx="307.97" cy="362.11" r="4.6" fill="#5cc0de"/><circle cx="317.00" cy="362.11" r="4.6" fill="#5cc0de"/><circle cx="326.03" cy="362.11" r="4.6" fill="#5cc0de"/><circle cx="335.3" cy="362.11" r="4.5" fill="#f0ea30"/><circle cx="344.5" cy="362.11" r="4.4" fill="#ecea48"/><circle cx="342.75" cy="360.91" r="1.1" fill="#161616"/><circle cx="346.25" cy="360.91" r="1.1" fill="#161616"/><path d="M342.1,363.41 Q344.5,366.01 346.9,363.41" stroke="#222" stroke-width="1.1" fill="none"/><circle cx="226.70" cy="371.59" r="4.6" fill="#bc7258"/><circle cx="235.73" cy="371.59" r="4.6" fill="#bc7258"/><circle cx="244.76" cy="371.59" r="4.6" fill="#bc7258"/><circle cx="253.79" cy="371.59" r="4.6" fill="#bc7258"/><circle cx="262.82" cy="371.59" r="4.6" fill="#bc7258"/><circle cx="271.85" cy="371.59" r="4.6" fill="#bc7258"/><circle cx="280.88" cy="371.59" r="4.6" fill="#bc7258"/><circle cx="289.91" cy="371.59" r="4.6" fill="#bc7258"/><circle cx="298.94" cy="371.59" r="4.6" fill="#bc7258"/><circle cx="307.97" cy="371.59" r="4.6" fill="#bc7258"/><circle cx="317.00" cy="371.59" r="4.6" fill="#bc7258"/><circle cx="326.03" cy="371.59" r="4.6" fill="#bc7258"/><circle cx="335.3" cy="371.59" r="4.5" fill="#f0ea30"/><circle cx="344.5" cy="371.59" r="4.4" fill="#ecea48"/><circle cx="342.75" cy="370.39" r="1.1" fill="#161616"/><circle cx="346.25" cy="370.39" r="1.1" fill="#161616"/><path d="M342.1,372.89 Q344.5,375.49 346.9,372.89" stroke="#222" stroke-width="1.1" fill="none"/><circle cx="226.70" cy="381.08" r="4.6" fill="#b01c78"/><circle cx="235.73" cy="381.08" r="4.6" fill="#b01c78"/><circle cx="244.76" cy="381.08" r="4.6" fill="#b01c78"/><circle cx="253.79" cy="381.08" r="4.6" fill="#b01c78"/><circle cx="262.82" cy="381.08" r="4.6" fill="#b01c78"/><circle cx="271.85" cy="381.08" r="4.6" fill="#b01c78"/><circle cx="280.88" cy="381.08" r="4.6" fill="#b01c78"/><circle cx="289.91" cy="381.08" r="4.6" fill="#b01c78"/><circle cx="298.94" cy="381.08" r="4.6" fill="#b01c78"/><circle cx="307.97" cy="381.08" r="4.6" fill="#b01c78"/><circle cx="317.00" cy="381.08" r="4.6" fill="#b01c78"/><circle cx="326.03" cy="381.08" r="4.6" fill="#b01c78"/><circle cx="335.3" cy="381.08" r="4.5" fill="#f0ea30"/><circle cx="344.5" cy="381.08" r="4.4" fill="#ecea48"/><circle cx="342.75" cy="379.88" r="1.1" fill="#161616"/><circle cx="346.25" cy="379.88" r="1.1" fill="#161616"/><path d="M342.1,382.38 Q344.5,384.98 346.9,382.38" stroke="#222" stroke-width="1.1" fill="none"/><circle cx="226.70" cy="390.56" r="4.6" fill="#2e90d4"/><circle cx="235.73" cy="390.56" r="4.6" fill="#2e90d4"/><circle cx="244.76" cy="390.56" r="4.6" fill="#2e90d4"/><circle cx="253.79" cy="390.56" r="4.6" fill="#2e90d4"/><circle cx="262.82" cy="390.56" r="4.6" fill="#2e90d4"/><circle cx="271.85" cy="390.56" r="4.6" fill="#2e90d4"/><circle cx="280.88" cy="390.56" r="4.6" fill="#2e90d4"/><circle cx="289.91" cy="390.56" r="4.6" fill="#2e90d4"/><circle cx="298.94" cy="390.56" r="4.6" fill="#2e90d4"/><circle cx="307.97" cy="390.56" r="4.6" fill="#2e90d4"/><circle cx="317.00" cy="390.56" r="4.6" fill="#2e90d4"/><circle cx="326.03" cy="390.56" r="4.6" fill="#2e90d4"/><circle cx="335.3" cy="390.56" r="4.5" fill="#f0ea30"/><circle cx="344.5" cy="390.56" r="4.4" fill="#ecea48"/><circle cx="342.75" cy="389.36" r="1.1" fill="#161616"/><circle cx="346.25" cy="389.36" r="1.1" fill="#161616"/><path d="M342.1,391.86 Q344.5,394.46 346.9,391.86" stroke="#222" stroke-width="1.1" fill="none"/><circle cx="226.70" cy="400.04" r="4.6" fill="#b01c78"/><circle cx="235.73" cy="400.04" r="4.6" fill="#b01c78"/><circle cx="244.76" cy="400.04" r="4.6" fill="#b01c78"/><circle cx="253.79" cy="400.04" r="4.6" fill="#b01c78"/><circle cx="262.82" cy="400.04" r="4.6" fill="#b01c78"/><circle cx="271.85" cy="400.04" r="4.6" fill="#b01c78"/><circle cx="280.88" cy="400.04" r="4.6" fill="#b01c78"/><circle cx="289.91" cy="400.04" r="4.6" fill="#b01c78"/><circle cx="298.94" cy="400.04" r="4.6" fill="#b01c78"/><circle cx="307.97" cy="400.04" r="4.6" fill="#b01c78"/><circle cx="317.00" cy="400.04" r="4.6" fill="#b01c78"/><circle cx="326.03" cy="400.04" r="4.6" fill="#b01c78"/><circle cx="335.3" cy="400.04" r="4.5" fill="#f0ea30"/><circle cx="344.5" cy="400.04" r="4.4" fill="#ecea48"/><circle cx="342.75" cy="398.84" r="1.1" fill="#161616"/><circle cx="346.25" cy="398.84" r="1.1" fill="#161616"/><path d="M342.1,401.34 Q344.5,403.94 346.9,401.34" stroke="#222" stroke-width="1.1" fill="none"/><circle cx="226.70" cy="409.53" r="4.6" fill="#5cc0de"/><circle cx="235.73" cy="409.53" r="4.6" fill="#5cc0de"/><circle cx="244.76" cy="409.53" r="4.6" fill="#5cc0de"/><circle cx="253.79" cy="409.53" r="4.6" fill="#5cc0de"/><circle cx="262.82" cy="409.53" r="4.6" fill="#5cc0de"/><circle cx="271.85" cy="409.53" r="4.6" fill="#5cc0de"/><circle cx="280.88" cy="409.53" r="4.6" fill="#5cc0de"/><circle cx="289.91" cy="409.53" r="4.6" fill="#5cc0de"/><circle cx="298.94" cy="409.53" r="4.6" fill="#5cc0de"/><circle cx="307.97" cy="409.53" r="4.6" fill="#5cc0de"/><circle cx="317.00" cy="409.53" r="4.6" fill="#5cc0de"/><circle cx="326.03" cy="409.53" r="4.6" fill="#5cc0de"/><circle cx="335.3" cy="409.53" r="4.5" fill="#f0ea30"/><circle cx="344.5" cy="409.53" r="4.4" fill="#ecea48"/><circle cx="342.75" cy="408.33" r="1.1" fill="#161616"/><circle cx="346.25" cy="408.33" r="1.1" fill="#161616"/><path d="M342.1,410.83 Q344.5,413.43 346.9,410.83" stroke="#222" stroke-width="1.1" fill="none"/><circle cx="226.70" cy="419.01" r="4.6" fill="#2e90d4"/><circle cx="235.73" cy="419.01" r="4.6" fill="#2e90d4"/><circle cx="244.76" cy="419.01" r="4.6" fill="#2e90d4"/><circle cx="253.79" cy="419.01" r="4.6" fill="#2e90d4"/><circle cx="262.82" cy="419.01" r="4.6" fill="#2e90d4"/><circle cx="271.85" cy="419.01" r="4.6" fill="#2e90d4"/><circle cx="280.88" cy="419.01" r="4.6" fill="#2e90d4"/><circle cx="289.91" cy="419.01" r="4.6" fill="#2e90d4"/><circle cx="298.94" cy="419.01" r="4.6" fill="#2e90d4"/><circle cx="307.97" cy="419.01" r="4.6" fill="#2e90d4"/><circle cx="317.00" cy="419.01" r="4.6" fill="#2e90d4"/><circle cx="326.03" cy="419.01" r="4.6" fill="#2e90d4"/><circle cx="335.3" cy="419.01" r="4.5" fill="#f0ea30"/><circle cx="344.5" cy="419.01" r="4.4" fill="#ecea48"/><circle cx="342.75" cy="417.81" r="1.1" fill="#161616"/><circle cx="346.25" cy="417.81" r="1.1" fill="#161616"/><path d="M342.1,420.31 Q344.5,422.91 346.9,420.31" stroke="#222" stroke-width="1.1" fill="none"/><circle cx="226.70" cy="428.49" r="4.6" fill="#22a092"/><circle cx="235.73" cy="428.49" r="4.6" fill="#22a092"/><circle cx="244.76" cy="428.49" r="4.6" fill="#22a092"/><circle cx="253.79" cy="428.49" r="4.6" fill="#22a092"/><circle cx="262.82" cy="428.49" r="4.6" fill="#22a092"/><circle cx="271.85" cy="428.49" r="4.6" fill="#22a092"/><circle cx="280.88" cy="428.49" r="4.6" fill="#22a092"/><circle cx="289.91" cy="428.49" r="4.6" fill="#22a092"/><circle cx="298.94" cy="428.49" r="4.6" fill="#22a092"/><circle cx="307.97" cy="428.49" r="4.6" fill="#22a092"/><circle cx="317.00" cy="428.49" r="4.6" fill="#22a092"/><circle cx="326.03" cy="428.49" r="4.6" fill="#22a092"/><circle cx="335.3" cy="428.49" r="4.5" fill="#f0ea30"/><circle cx="344.5" cy="428.49" r="4.4" fill="#ecea48"/><circle cx="342.75" cy="427.29" r="1.1" fill="#161616"/><circle cx="346.25" cy="427.29" r="1.1" fill="#161616"/><path d="M342.1,429.79 Q344.5,432.39 346.9,429.79" stroke="#222" stroke-width="1.1" fill="none"/><circle cx="226.70" cy="437.98" r="4.6" fill="#3858c4"/><circle cx="235.73" cy="437.98" r="4.6" fill="#3858c4"/><circle cx="244.76" cy="437.98" r="4.6" fill="#3858c4"/><circle cx="253.79" cy="437.98" r="4.6" fill="#3858c4"/><circle cx="262.82" cy="437.98" r="4.6" fill="#3858c4"/><circle cx="271.85" cy="437.98" r="4.6" fill="#3858c4"/><circle cx="280.88" cy="437.98" r="4.6" fill="#3858c4"/><circle cx="289.91" cy="437.98" r="4.6" fill="#3858c4"/><circle cx="298.94" cy="437.98" r="4.6" fill="#3858c4"/><circle cx="307.97" cy="437.98" r="4.6" fill="#3858c4"/><circle cx="317.00" cy="437.98" r="4.6" fill="#3858c4"/><circle cx="326.03" cy="437.98" r="4.6" fill="#3858c4"/><circle cx="335.3" cy="437.98" r="4.5" fill="#f0ea30"/><circle cx="344.5" cy="437.98" r="4.4" fill="#ecea48"/><circle cx="342.75" cy="436.78" r="1.1" fill="#161616"/><circle cx="346.25" cy="436.78" r="1.1" fill="#161616"/><path d="M342.1,439.28 Q344.5,441.88 346.9,439.28" stroke="#222" stroke-width="1.1" fill="none"/><circle cx="226.70" cy="447.46" r="4.6" fill="#2e90d4"/><circle cx="235.73" cy="447.46" r="4.6" fill="#2e90d4"/><circle cx="244.76" cy="447.46" r="4.6" fill="#2e90d4"/><circle cx="253.79" cy="447.46" r="4.6" fill="#2e90d4"/><circle cx="262.82" cy="447.46" r="4.6" fill="#2e90d4"/><circle cx="271.85" cy="447.46" r="4.6" fill="#2e90d4"/><circle cx="280.88" cy="447.46" r="4.6" fill="#2e90d4"/><circle cx="289.91" cy="447.46" r="4.6" fill="#2e90d4"/><circle cx="298.94" cy="447.46" r="4.6" fill="#2e90d4"/><circle cx="307.97" cy="447.46" r="4.6" fill="#2e90d4"/><circle cx="317.00" cy="447.46" r="4.6" fill="#2e90d4"/><circle cx="326.03" cy="447.46" r="4.6" fill="#2e90d4"/><circle cx="335.3" cy="447.46" r="4.5" fill="#f0ea30"/><circle cx="344.5" cy="447.46" r="4.4" fill="#ecea48"/><circle cx="342.75" cy="446.26" r="1.1" fill="#161616"/><circle cx="346.25" cy="446.26" r="1.1" fill="#161616"/><path d="M342.1,448.76 Q344.5,451.36 346.9,448.76" stroke="#222" stroke-width="1.1" fill="none"/><circle cx="226.70" cy="456.94" r="4.6" fill="#b01c78"/><circle cx="235.73" cy="456.94" r="4.6" fill="#b01c78"/><circle cx="244.76" cy="456.94" r="4.6" fill="#b01c78"/><circle cx="253.79" cy="456.94" r="4.6" fill="#b01c78"/><circle cx="262.82" cy="456.94" r="4.6" fill="#b01c78"/><circle cx="271.85" cy="456.94" r="4.6" fill="#b01c78"/><circle cx="280.88" cy="456.94" r="4.6" fill="#b01c78"/><circle cx="289.91" cy="456.94" r="4.6" fill="#b01c78"/><circle cx="298.94" cy="456.94" r="4.6" fill="#b01c78"/><circle cx="307.97" cy="456.94" r="4.6" fill="#b01c78"/><circle cx="317.00" cy="456.94" r="4.6" fill="#b01c78"/><circle cx="326.03" cy="456.94" r="4.6" fill="#b01c78"/><circle cx="335.3" cy="456.94" r="4.5" fill="#f0ea30"/><circle cx="344.5" cy="456.94" r="4.4" fill="#ecea48"/><circle cx="342.75" cy="455.74" r="1.1" fill="#161616"/><circle cx="346.25" cy="455.74" r="1.1" fill="#161616"/><path d="M342.1,458.24 Q344.5,460.84 346.9,458.24" stroke="#222" stroke-width="1.1" fill="none"/><circle cx="226.70" cy="466.42" r="4.6" fill="#2e90d4"/><circle cx="235.73" cy="466.42" r="4.6" fill="#2e90d4"/><circle cx="244.76" cy="466.42" r="4.6" fill="#2e90d4"/><circle cx="253.79" cy="466.42" r="4.6" fill="#2e90d4"/><circle cx="262.82" cy="466.42" r="4.6" fill="#2e90d4"/><circle cx="271.85" cy="466.42" r="4.6" fill="#2e90d4"/><circle cx="280.88" cy="466.42" r="4.6" fill="#2e90d4"/><circle cx="289.91" cy="466.42" r="4.6" fill="#2e90d4"/><circle cx="298.94" cy="466.42" r="4.6" fill="#2e90d4"/><circle cx="307.97" cy="466.42" r="4.6" fill="#2e90d4"/><circle cx="317.00" cy="466.42" r="4.6" fill="#2e90d4"/><circle cx="326.03" cy="466.42" r="4.6" fill="#2e90d4"/><circle cx="335.3" cy="466.42" r="4.5" fill="#f0ea30"/><circle cx="344.5" cy="466.42" r="4.4" fill="#ecea48"/><circle cx="342.75" cy="465.22" r="1.1" fill="#161616"/><circle cx="346.25" cy="465.22" r="1.1" fill="#161616"/><path d="M342.1,467.72 Q344.5,470.32 346.9,467.72" stroke="#222" stroke-width="1.1" fill="none"/><circle cx="226.70" cy="475.91" r="4.6" fill="#8850b8"/><circle cx="235.73" cy="475.91" r="4.6" fill="#8850b8"/><circle cx="244.76" cy="475.91" r="4.6" fill="#8850b8"/><circle cx="253.79" cy="475.91" r="4.6" fill="#8850b8"/><circle cx="262.82" cy="475.91" r="4.6" fill="#8850b8"/><circle cx="271.85" cy="475.91" r="4.6" fill="#8850b8"/><circle cx="280.88" cy="475.91" r="4.6" fill="#8850b8"/><circle cx="289.91" cy="475.91" r="4.6" fill="#8850b8"/><circle cx="298.94" cy="475.91" r="4.6" fill="#8850b8"/><circle cx="307.97" cy="475.91" r="4.6" fill="#8850b8"/><circle cx="317.00" cy="475.91" r="4.6" fill="#8850b8"/><circle cx="326.03" cy="475.91" r="4.6" fill="#8850b8"/><circle cx="335.3" cy="475.91" r="4.5" fill="#f0ea30"/><circle cx="344.5" cy="475.91" r="4.4" fill="#ecea48"/><circle cx="342.75" cy="474.71" r="1.1" fill="#161616"/><circle cx="346.25" cy="474.71" r="1.1" fill="#161616"/><path d="M342.1,477.21 Q344.5,479.81 346.9,477.21" stroke="#222" stroke-width="1.1" fill="none"/></g>
<g transform="translate(443.8,572.3)"><path d="M-3.2,-0.5 A3.3,3.3 0 0 1 2.6,-2.3" stroke="#111" stroke-width="1.8" fill="none"/><path d="M3.8,-4.8 L3.8,-0.6 L-0.3,-1.2 Z" fill="#111"/><path d="M3.2,0.5 A3.3,3.3 0 0 1 -2.6,2.3" stroke="#111" stroke-width="1.8" fill="none"/><path d="M-3.8,4.8 L-3.8,0.6 L0.3,1.2 Z" fill="#111"/></g>
<path d="M636.9,555.50 L637.9,554.71 L638.9,553.93 L639.9,553.17 L640.9,552.43 L641.9,551.72 L642.9,551.04 L643.9,550.39 L644.9,549.79 L645.9,549.24 L646.9,548.74 L647.9,548.29 L648.9,547.86 L649.9,547.45 L650.9,547.07 L651.9,546.70 L652.9,546.35 L653.9,546.01 L654.9,545.69 L655.9,545.37 L656.9,545.07 L657.9,544.77 L658.9,544.48 L659.9,544.20 L660.9,543.91 L661.9,543.63 L662.9,543.34 L663.9,543.05 L664.9,542.75 L665.9,542.46 L666.9,542.17 L667.9,541.88 L668.9,541.59 L669.9,541.31 L670.9,541.03 L671.9,540.75 L672.9,540.48 L673.9,540.21 L674.9,539.95 L675.9,539.69 L676.9,539.43 L677.9,539.18 L678.9,538.93 L679.9,538.69 L680.9,538.46 L681.9,538.23 L682.9,538.01 L683.9,537.78 L684.9,537.56 L685.9,537.34 L686.9,537.12 L687.9,536.91 L688.9,536.70 L689.9,536.50 L690.9,536.30 L691.9,536.10 L692.9,535.91 L693.9,535.72 L694.9,535.54 L695.9,535.37 L696.9,535.20 L697.9,535.04 L698.9,534.88 L699.9,534.73 L700.9,534.58 L701.9,534.43 L702.9,534.28 L703.9,534.13 L704.9,533.98 L705.9,533.84 L706.9,533.70 L707.9,533.57 L708.9,533.44 L709.9,533.32 L710.9,533.21 L711.9,533.11 L712.9,533.01 L713.9,532.93 L714.9,532.86 L715.9,532.80 L716.9,532.76 L717.9,532.71 L718.9,532.66 L719.9,532.62 L720.9,532.58 L721.9,532.55 L722.9,532.52 L723.9,532.51 L724.9,532.50 L725.9,532.50 L726.9,532.50 L727.9,532.50 L728.9,532.50 L729.9,532.50 L730.9,532.50 L731.9,532.50 L732.9,532.50 L733.9,532.50 L734.9,532.50 L735.9,532.50 L736.9,532.50 L737.9,532.50 L738.9,532.50 L739.9,532.50 L799.7,532.5" stroke="#d04050" stroke-width="1.1" fill="none" stroke-linejoin="round"/>
<text x="22.00" y="16" font-size="11.9" fill="#1e1e1e" font-weight="normal" textLength="522.97" lengthAdjust="spacingAndGlyphs" stroke="#1e1e1e" stroke-width="0.15">OamLab_V1.10 - NetLogo {\\LENOVODT\LenovoDT- MyDocs1\01 Economics Project\W014 NLG OamLab}</text>
<text x="3.23" y="36.6" font-size="12.3" fill="#1e1e1e" font-weight="normal" textLength="17.23" lengthAdjust="spacingAndGlyphs" stroke="#1e1e1e" stroke-width="0.15">File</text>
<text x="28.09" y="36.6" font-size="12.3" fill="#1e1e1e" font-weight="normal" textLength="19.18" lengthAdjust="spacingAndGlyphs" stroke="#1e1e1e" stroke-width="0.15">Edit</text>
<text x="57.00" y="36.6" font-size="12.3" fill="#1e1e1e" font-weight="normal" textLength="25.63" lengthAdjust="spacingAndGlyphs" stroke="#1e1e1e" stroke-width="0.15">Tools</text>
<text x="92.00" y="36.6" font-size="12.3" fill="#1e1e1e" font-weight="normal" textLength="29.23" lengthAdjust="spacingAndGlyphs" stroke="#1e1e1e" stroke-width="0.15">Zoom</text>
<text x="130.00" y="36.6" font-size="12.3" fill="#1e1e1e" font-weight="normal" textLength="22.13" lengthAdjust="spacingAndGlyphs" stroke="#1e1e1e" stroke-width="0.15">Tabs</text>
<text x="160.06" y="36.6" font-size="12.3" fill="#1e1e1e" font-weight="normal" textLength="23.79" lengthAdjust="spacingAndGlyphs" stroke="#1e1e1e" stroke-width="0.15">Help</text>
<text x="7.40" y="57.6" font-size="10.5" fill="#1e1e1e" font-weight="normal" textLength="41.14" lengthAdjust="spacingAndGlyphs" stroke="#1e1e1e" stroke-width="0.15">Interface</text>
<text x="59.60" y="59.7" font-size="10.5" fill="#1e1e1e" font-weight="normal" textLength="18.13" lengthAdjust="spacingAndGlyphs" stroke="#1e1e1e" stroke-width="0.15">Info</text>
<text x="88.70" y="59.7" font-size="10.5" fill="#1e1e1e" font-weight="normal" textLength="22.85" lengthAdjust="spacingAndGlyphs" stroke="#1e1e1e" stroke-width="0.15">Code</text>
<text x="5.00" y="108.1" font-size="10" fill="#8c8c8c" font-weight="normal" textLength="16.78" lengthAdjust="spacingAndGlyphs" stroke="#8c8c8c" stroke-width="0.15">Edit</text>
<text x="33.30" y="108.1" font-size="10" fill="#8c8c8c" font-weight="normal" textLength="28.57" lengthAdjust="spacingAndGlyphs" stroke="#8c8c8c" stroke-width="0.15">Delete</text>
<text x="72.90" y="108.1" font-size="10" fill="#1e1e1e" font-weight="normal" textLength="17.76" lengthAdjust="spacingAndGlyphs" stroke="#1e1e1e" stroke-width="0.15">Add</text>
<text x="101.30" y="90.8" font-size="4.8" fill="#111" font-weight="bold" textLength="19.26" lengthAdjust="spacingAndGlyphs">Abc def</text>
<text x="101.30" y="96.8" font-size="4.8" fill="#111" font-weight="bold" textLength="16.60" lengthAdjust="spacingAndGlyphs">ghi jkl</text>
<text x="125.60" y="97.5" font-size="11.5" fill="#111" font-weight="normal" textLength="20.99" lengthAdjust="spacingAndGlyphs" stroke="#111" stroke-width="0.15">Note</text>
<text x="312.00" y="111.3" font-size="11" fill="#222" font-weight="normal" textLength="25.49" lengthAdjust="spacingAndGlyphs" stroke="#222" stroke-width="0.15">faster</text>
<text x="404.00" y="89.2" font-size="11.5" fill="#222" font-weight="normal" textLength="59.08" lengthAdjust="spacingAndGlyphs" stroke="#222" stroke-width="0.15">view updates</text>
<text x="393.50" y="110" font-size="11.5" fill="#111" font-weight="normal" textLength="33.19" lengthAdjust="spacingAndGlyphs" stroke="#111" stroke-width="0.15">on ticks</text>
<text x="510.00" y="99.2" font-size="11" fill="#111" font-weight="normal" textLength="44.05" lengthAdjust="spacingAndGlyphs" stroke="#111" stroke-width="0.15">Settings...</text>
<text x="7.50" y="153" font-size="17.7" fill="#111" font-weight="normal" textLength="19.67" lengthAdjust="spacingAndGlyphs" stroke="#111" stroke-width="0.15">01</text>
<text x="34.31" y="160.8" font-size="25.5" fill="#c8282d" font-weight="normal" textLength="96.67" lengthAdjust="spacingAndGlyphs" stroke="#c8282d" stroke-width="0.15">OamLab</text>
<text x="35.80" y="175.8" font-size="10.5" fill="#222" font-weight="normal" textLength="85.98" lengthAdjust="spacingAndGlyphs" stroke="#222" stroke-width="0.15">(NetLogo Platform)</text>
<text x="59.70" y="190.8" font-size="10.5" fill="#222" font-weight="normal" textLength="42.65" lengthAdjust="spacingAndGlyphs" stroke="#222" stroke-width="0.15">Featuring</text>
<text x="28.70" y="204.7" font-size="10.5" fill="#222" font-weight="normal" textLength="100.35" lengthAdjust="spacingAndGlyphs" stroke="#222" stroke-width="0.15">Linked Halves of Open</text>
<text x="9.20" y="220" font-size="16.3" fill="#111" font-weight="normal" textLength="139.24" lengthAdjust="spacingAndGlyphs" stroke="#111" stroke-width="0.15">Atwood&#x27;s Machines</text>
<text x="27.50" y="233.3" font-size="9.5" fill="#222" font-weight="normal" textLength="102.65" lengthAdjust="spacingAndGlyphs" stroke="#222" stroke-width="0.15">(Chains of linked HOAMs)</text>
<text x="13.00" y="253" font-size="10.3" fill="#222" font-weight="normal" textLength="69.68" lengthAdjust="spacingAndGlyphs" stroke="#222" stroke-width="0.15">INSTRUCTIONS</text>
<text x="13.00" y="266.8" font-size="10.3" fill="#222" font-weight="normal" textLength="117.94" lengthAdjust="spacingAndGlyphs" stroke="#222" stroke-width="0.15">1. Set Scenario and Parms</text>
<text x="13.00" y="280.5" font-size="10.3" fill="#222" font-weight="normal" textLength="124.92" lengthAdjust="spacingAndGlyphs" stroke="#222" stroke-width="0.15">2. Choose a seed (optional)</text>
<text x="13.00" y="294.3" font-size="10.3" fill="#222" font-weight="normal" textLength="40.97" lengthAdjust="spacingAndGlyphs" stroke="#222" stroke-width="0.15">3. &#x27;Setup&#x27;</text>
<text x="13.00" y="308" font-size="10.3" fill="#222" font-weight="normal" textLength="133.22" lengthAdjust="spacingAndGlyphs" stroke="#222" stroke-width="0.15">4. Set ops switches (optional)</text>
<text x="13.00" y="321.3" font-size="10.3" fill="#222" font-weight="normal" textLength="84.47" lengthAdjust="spacingAndGlyphs" stroke="#222" stroke-width="0.15">5. &#x27;One Tick&#x27; or &#x27;Go&#x27;</text>
<text x="15.00" y="346.75" font-size="10.5" fill="#0e2220" font-weight="normal" textLength="85.65" lengthAdjust="spacingAndGlyphs" stroke="#0e2220" stroke-width="0.15">gs-fitness-measure</text>
<text x="18.50" y="365.5" font-size="10.5" fill="#0e2220" font-weight="normal" textLength="40.62" lengthAdjust="spacingAndGlyphs" stroke="#0e2220" stroke-width="0.15">Mj - Joint</text>
<text x="15.00" y="391.5" font-size="10.5" fill="#0e2220" font-weight="normal" textLength="51.35" lengthAdjust="spacingAndGlyphs" stroke="#0e2220" stroke-width="0.15">gs-scenario</text>
<text x="18.50" y="410.3" font-size="10.5" fill="#0e2220" font-weight="normal" textLength="91.60" lengthAdjust="spacingAndGlyphs" stroke="#0e2220" stroke-width="0.15">Low Odum Efficiency</text>
<text x="20.00" y="451.75" font-size="10.5" fill="#0e2220" font-weight="normal" textLength="70.24" lengthAdjust="spacingAndGlyphs" stroke="#0e2220" stroke-width="0.15">g-use-this-seed</text>
<text x="184.60" y="451.75" font-size="10.5" fill="#0e2220" font-weight="normal" textLength="5.84" lengthAdjust="spacingAndGlyphs" stroke="#0e2220" stroke-width="0.15">7</text>
<text x="90.80" y="485.1" font-size="11" fill="#1c1c3a" font-weight="normal" textLength="26.31" lengthAdjust="spacingAndGlyphs" stroke="#1c1c3a" stroke-width="0.15">Setup</text>
<text x="10.00" y="509.8" font-size="10.3" fill="#222" font-weight="normal" textLength="112.08" lengthAdjust="spacingAndGlyphs" stroke="#222" stroke-width="0.15">OPERATIONS SWITCHES</text>
<text x="27.30" y="526.6" font-size="10" fill="#0e2624" font-weight="normal" textLength="13.34" lengthAdjust="spacingAndGlyphs" stroke="#0e2624" stroke-width="0.15">On</text>
<text x="27.30" y="537.3" font-size="10" fill="#0e2624" font-weight="normal" textLength="13.57" lengthAdjust="spacingAndGlyphs" stroke="#0e2624" stroke-width="0.15">Off</text>
<text x="50.30" y="530.6" font-size="10.8" fill="#0e2220" font-weight="normal" textLength="51.60" lengthAdjust="spacingAndGlyphs" stroke="#0e2220" stroke-width="0.15">gb-plots-on</text>
<text x="170.10" y="526.6" font-size="10" fill="#0e2624" font-weight="normal" textLength="13.34" lengthAdjust="spacingAndGlyphs" stroke="#0e2624" stroke-width="0.15">On</text>
<text x="170.10" y="537.3" font-size="10" fill="#0e2624" font-weight="normal" textLength="13.57" lengthAdjust="spacingAndGlyphs" stroke="#0e2624" stroke-width="0.15">Off</text>
<text x="193.10" y="530.8" font-size="10.8" fill="#0e2220" font-weight="normal" textLength="67.63" lengthAdjust="spacingAndGlyphs" stroke="#0e2220" stroke-width="0.15">gb-mutate-tails</text>
<text x="27.30" y="559.2" font-size="10" fill="#0e2624" font-weight="normal" textLength="13.34" lengthAdjust="spacingAndGlyphs" stroke="#0e2624" stroke-width="0.15">On</text>
<text x="27.30" y="569.9" font-size="10" fill="#0e2624" font-weight="normal" textLength="13.57" lengthAdjust="spacingAndGlyphs" stroke="#0e2624" stroke-width="0.15">Off</text>
<text x="50.30" y="563" font-size="10.8" fill="#0e2220" font-weight="normal" textLength="77.53" lengthAdjust="spacingAndGlyphs" stroke="#0e2220" stroke-width="0.15">gb-mutate-heads</text>
<text x="170.10" y="559.2" font-size="10" fill="#0e2624" font-weight="normal" textLength="13.34" lengthAdjust="spacingAndGlyphs" stroke="#0e2624" stroke-width="0.15">On</text>
<text x="170.10" y="569.9" font-size="10" fill="#0e2624" font-weight="normal" textLength="13.57" lengthAdjust="spacingAndGlyphs" stroke="#0e2624" stroke-width="0.15">Off</text>
<text x="193.10" y="563.3" font-size="10.8" fill="#0e2220" font-weight="normal" textLength="77.70" lengthAdjust="spacingAndGlyphs" stroke="#0e2220" stroke-width="0.15">gb-horse-race-on</text>
<text x="209.00" y="153.4" font-size="17" fill="#111" font-weight="normal" textLength="147.92" lengthAdjust="spacingAndGlyphs" stroke="#111" stroke-width="0.5">THE HOAM CHAINS</text>
<text x="340.60" y="180" font-size="9.5" fill="#222" font-weight="bold" textLength="12.14" lengthAdjust="spacingAndGlyphs">3D</text>
<text x="394.40" y="153.4" font-size="17" fill="#111" font-weight="normal" textLength="323.12" lengthAdjust="spacingAndGlyphs" stroke="#111" stroke-width="0.5">CHAIN-RELATED AGGREGATE STATISTICS</text>
<text x="400.50" y="183.75" font-size="10.6" fill="#1e1e14" font-weight="normal" textLength="79.78" lengthAdjust="spacingAndGlyphs" stroke="#1e1e14" stroke-width="0.15">Number of Chains</text>
<text x="405.60" y="201.9" font-size="10.6" fill="#1e1e1e" font-weight="normal" textLength="11.78" lengthAdjust="spacingAndGlyphs" stroke="#1e1e1e" stroke-width="0.15">30</text>
<text x="505.50" y="183.3" font-size="10.6" fill="#1e1e14" font-weight="normal" textLength="64.60" lengthAdjust="spacingAndGlyphs" stroke="#1e1e14" stroke-width="0.15">Ave Drop Time</text>
<text x="509.80" y="201.25" font-size="10.6" fill="#1e1e1e" font-weight="normal" textLength="42.19" lengthAdjust="spacingAndGlyphs" stroke="#1e1e1e" stroke-width="0.15">119.6861</text>
<text x="592.50" y="176.9" font-size="12.5" fill="#222" font-weight="normal" textLength="36.28" lengthAdjust="spacingAndGlyphs" stroke="#222" stroke-width="0.15">CHAIN</text>
<text x="592.50" y="193.5" font-size="12.5" fill="#222" font-weight="normal" textLength="76.82" lengthAdjust="spacingAndGlyphs" stroke="#222" stroke-width="0.15">OPERATIONS</text>
<text x="591.58" y="210.25" font-size="12.5" fill="#222" font-weight="normal" textLength="64.33" lengthAdjust="spacingAndGlyphs" stroke="#222" stroke-width="0.15">MEASURES</text>
<text x="399.80" y="243.3" font-size="10.6" fill="#1e1e14" font-weight="normal" textLength="30.07" lengthAdjust="spacingAndGlyphs" stroke="#1e1e14" stroke-width="0.15">Chains</text>
<text x="404.60" y="261" font-size="10.6" fill="#1e1e1e" font-weight="normal" textLength="11.78" lengthAdjust="spacingAndGlyphs" stroke="#1e1e1e" stroke-width="0.15">30</text>
<text x="460.70" y="243.3" font-size="10.6" fill="#1e1e14" font-weight="normal" textLength="28.58" lengthAdjust="spacingAndGlyphs" stroke="#1e1e14" stroke-width="0.15">Heads</text>
<text x="465.40" y="261" font-size="10.6" fill="#1e1e1e" font-weight="normal" textLength="11.78" lengthAdjust="spacingAndGlyphs" stroke="#1e1e1e" stroke-width="0.15">30</text>
<text x="532.00" y="243.3" font-size="10.6" fill="#1e1e14" font-weight="normal" textLength="29.07" lengthAdjust="spacingAndGlyphs" stroke="#1e1e14" stroke-width="0.15">Bodies</text>
<text x="536.90" y="261" font-size="10.6" fill="#1e1e1e" font-weight="normal" textLength="16.50" lengthAdjust="spacingAndGlyphs" stroke="#1e1e1e" stroke-width="0.15">360</text>
<text x="603.50" y="243.3" font-size="10.6" fill="#1e1e14" font-weight="normal" textLength="19.27" lengthAdjust="spacingAndGlyphs" stroke="#1e1e14" stroke-width="0.15">Tails</text>
<text x="608.75" y="261" font-size="10.6" fill="#1e1e1e" font-weight="normal" textLength="11.78" lengthAdjust="spacingAndGlyphs" stroke="#1e1e1e" stroke-width="0.15">30</text>
<text x="674.00" y="243.3" font-size="10.6" fill="#1e1e14" font-weight="normal" textLength="32.51" lengthAdjust="spacingAndGlyphs" stroke="#1e1e14" stroke-width="0.15">HOAMs</text>
<text x="679.25" y="261" font-size="10.6" fill="#1e1e1e" font-weight="normal" textLength="16.15" lengthAdjust="spacingAndGlyphs" stroke="#1e1e1e" stroke-width="0.15">420</text>
<text x="734.50" y="244.25" font-size="12.5" fill="#222" font-weight="normal" textLength="77.46" lengthAdjust="spacingAndGlyphs" stroke="#222" stroke-width="0.15">STRUCTURAL</text>
<text x="734.50" y="260.75" font-size="12.5" fill="#222" font-weight="normal" textLength="49.57" lengthAdjust="spacingAndGlyphs" stroke="#222" stroke-width="0.15">COUNTS</text>
<text x="399.70" y="310.9" font-size="10.6" fill="#1e1e14" font-weight="normal" textLength="51.83" lengthAdjust="spacingAndGlyphs" stroke="#1e1e14" stroke-width="0.15">Geo Ave Mj</text>
<text x="404.30" y="327.6" font-size="10.6" fill="#1e1e1e" font-weight="normal" textLength="42.89" lengthAdjust="spacingAndGlyphs" stroke="#1e1e1e" stroke-width="0.15">0.299713</text>
<text x="475.25" y="310.9" font-size="10.6" fill="#1e1e14" font-weight="normal" textLength="52.70" lengthAdjust="spacingAndGlyphs" stroke="#1e1e14" stroke-width="0.15">Geo Ave Mt</text>
<text x="480.60" y="327.6" font-size="10.6" fill="#1e1e1e" font-weight="normal" textLength="42.60" lengthAdjust="spacingAndGlyphs" stroke="#1e1e1e" stroke-width="0.15">0.486168</text>
<text x="552.30" y="310.9" font-size="10.6" fill="#1e1e14" font-weight="normal" textLength="53.20" lengthAdjust="spacingAndGlyphs" stroke="#1e1e14" stroke-width="0.15">Geo Ave Eu</text>
<text x="557.40" y="327.6" font-size="10.6" fill="#1e1e1e" font-weight="normal" textLength="70.50" lengthAdjust="spacingAndGlyphs" stroke="#1e1e1e" stroke-width="0.15">0.61648039680</text>
<text x="632.50" y="315" font-size="12.5" fill="#222" font-weight="normal" textLength="201.06" lengthAdjust="spacingAndGlyphs" stroke="#222" stroke-width="0.15">GEOMETRIC AVERAGE OF FITNESS</text>
<text x="631.55" y="331.75" font-size="12.5" fill="#222" font-weight="normal" textLength="154.28" lengthAdjust="spacingAndGlyphs" stroke="#222" stroke-width="0.15">MEASURES SYSTEM-WIDE</text>
<text x="372.70" y="459" font-size="10.6" fill="#1e1e14" font-weight="normal" textLength="21.56" lengthAdjust="spacingAndGlyphs" stroke="#1e1e14" stroke-width="0.15">Ticks</text>
<text x="377.90" y="477" font-size="10.6" fill="#1e1e1e" font-weight="normal" textLength="22.10" lengthAdjust="spacingAndGlyphs" stroke="#1e1e1e" stroke-width="0.15">1397</text>
<text x="427.00" y="455.6" font-size="11" fill="#222" font-weight="normal" textLength="60.35" lengthAdjust="spacingAndGlyphs" stroke="#222" stroke-width="0.15">Designed for:</text>
<text x="427.00" y="468.7" font-size="11" fill="#222" font-weight="normal" textLength="103.95" lengthAdjust="spacingAndGlyphs" stroke="#222" stroke-width="0.15">Resolution 1024 x 768.</text>
<text x="427.00" y="482" font-size="11" fill="#222" font-weight="normal" textLength="137.15" lengthAdjust="spacingAndGlyphs" stroke="#222" stroke-width="0.15">[Use &#x27;Ctrl-&#x27; or &#x27;Ctrl+&#x27; to resize.]</text>
<text x="322.70" y="523.9" font-size="10.3" fill="#c84848" font-weight="normal" textLength="60.24" lengthAdjust="spacingAndGlyphs" stroke="#c84848" stroke-width="0.15">Be sure other</text>
<text x="322.70" y="537.1" font-size="10.3" fill="#c84848" font-weight="normal" textLength="53.65" lengthAdjust="spacingAndGlyphs" stroke="#c84848" stroke-width="0.15">&#x27;Go&#x27; buttons</text>
<text x="322.70" y="550.8" font-size="10.3" fill="#c84848" font-weight="normal" textLength="29.96" lengthAdjust="spacingAndGlyphs" stroke="#c84848" stroke-width="0.15">are off</text>
<text x="322.70" y="564.3" font-size="10.3" fill="#c84848" font-weight="normal" textLength="49.62" lengthAdjust="spacingAndGlyphs" stroke="#c84848" stroke-width="0.15">before you</text>
<text x="322.70" y="578" font-size="10.3" fill="#c84848" font-weight="normal" textLength="55.18" lengthAdjust="spacingAndGlyphs" stroke="#c84848" stroke-width="0.15">turn this on.</text>
<text x="529.50" y="526.8" font-size="10.3" fill="#7a5050" font-weight="normal" textLength="25.69" lengthAdjust="spacingAndGlyphs" stroke="#7a5050" stroke-width="0.15">&lt;&lt;---</text>
<text x="563.70" y="526.8" font-size="10.3" fill="#c84848" font-weight="normal" textLength="29.96" lengthAdjust="spacingAndGlyphs" stroke="#c84848" stroke-width="0.15">To halt</text>
<text x="528.90" y="540.4" font-size="10.3" fill="#c84848" font-weight="normal" textLength="52.42" lengthAdjust="spacingAndGlyphs" stroke="#c84848" stroke-width="0.15">the run at a</text>
<text x="528.90" y="553.6" font-size="10.3" fill="#c84848" font-weight="normal" textLength="56.94" lengthAdjust="spacingAndGlyphs" stroke="#c84848" stroke-width="0.15">pre-specified</text>
<text x="528.90" y="567.6" font-size="10.3" fill="#c84848" font-weight="normal" textLength="53.26" lengthAdjust="spacingAndGlyphs" stroke="#c84848" stroke-width="0.15">tick, enter it</text>
<text x="528.90" y="581.2" font-size="10.3" fill="#c84848" font-weight="normal" textLength="23.88" lengthAdjust="spacingAndGlyphs" stroke="#c84848" stroke-width="0.15">here.</text>
<text x="400.10" y="538.9" font-size="11" fill="#1c1c3a" font-weight="normal" textLength="38.06" lengthAdjust="spacingAndGlyphs" stroke="#1c1c3a" stroke-width="0.15">One Tick</text>
<text x="412.80" y="571.25" font-size="11" fill="#1c1c3a" font-weight="normal" textLength="14.67" lengthAdjust="spacingAndGlyphs" stroke="#1c1c3a" stroke-width="0.15">Go</text>
<text x="456.60" y="533.3" font-size="9.3" fill="#0e201e" font-weight="bold" textLength="53.82" lengthAdjust="spacing">g-halt-at-tick</text>
<text x="461.00" y="555.5" font-size="11" fill="#7a4a22" font-weight="normal" textLength="12.24" lengthAdjust="spacingAndGlyphs" stroke="#7a4a22" stroke-width="0.35">–1</text>
<text x="622.80" y="406" font-size="10.6" fill="#1e1e14" font-weight="normal" textLength="118.90" lengthAdjust="spacingAndGlyphs" stroke="#1e1e14" stroke-width="0.15">Active Fitness Measure Is:</text>
<text x="626.70" y="423.5" font-size="10.6" fill="#1e1e1e" font-weight="normal" textLength="40.95" lengthAdjust="spacingAndGlyphs" stroke="#1e1e1e" stroke-width="0.15">Mj - Joint</text>
<text x="656.60" y="448" font-size="11" fill="#111" font-weight="bold" textLength="122.72" lengthAdjust="spacingAndGlyphs">Active Fitness Measure</text>
<text x="630.30" y="466" font-size="10.6" fill="#1e1e1e" font-weight="normal" textLength="5.89" lengthAdjust="spacingAndGlyphs" stroke="#1e1e1e" stroke-width="0.15">1</text>
<text x="629.20" y="563.5" font-size="10.6" fill="#1e1e1e" font-weight="normal" textLength="5.89" lengthAdjust="spacingAndGlyphs" stroke="#1e1e1e" stroke-width="0.15">0</text>
<text x="635.60" y="577.2" font-size="10.6" fill="#1e1e1e" font-weight="normal" textLength="5.89" lengthAdjust="spacingAndGlyphs" stroke="#1e1e1e" stroke-width="0.15">0</text>
<text x="698.70" y="577.2" font-size="10.6" fill="#1e1e1e" font-weight="normal" textLength="20.55" lengthAdjust="spacingAndGlyphs" stroke="#1e1e1e" stroke-width="0.15">Ticks</text>
<text x="775.60" y="577.2" font-size="10.6" fill="#1e1e1e" font-weight="normal" textLength="21.30" lengthAdjust="spacingAndGlyphs" stroke="#1e1e1e" stroke-width="0.15">1400</text>
<text x="0" y="0" font-size="10.6" fill="#1e1e1e" textLength="26.5" lengthAdjust="spacingAndGlyphs" transform="translate(632.8,523.8) rotate(-90)">Index</text>
<text x="472.72" y="655.75" font-size="16.7" fill="#c83232" font-weight="normal" textLength="438.85" lengthAdjust="spacingAndGlyphs" stroke="#c83232" stroke-width="0.3">(2) Parameter Sliders, (3) Debug Tools, (4) Graphs ---&gt;&gt;&gt;</text>
</svg></div></body></html>
